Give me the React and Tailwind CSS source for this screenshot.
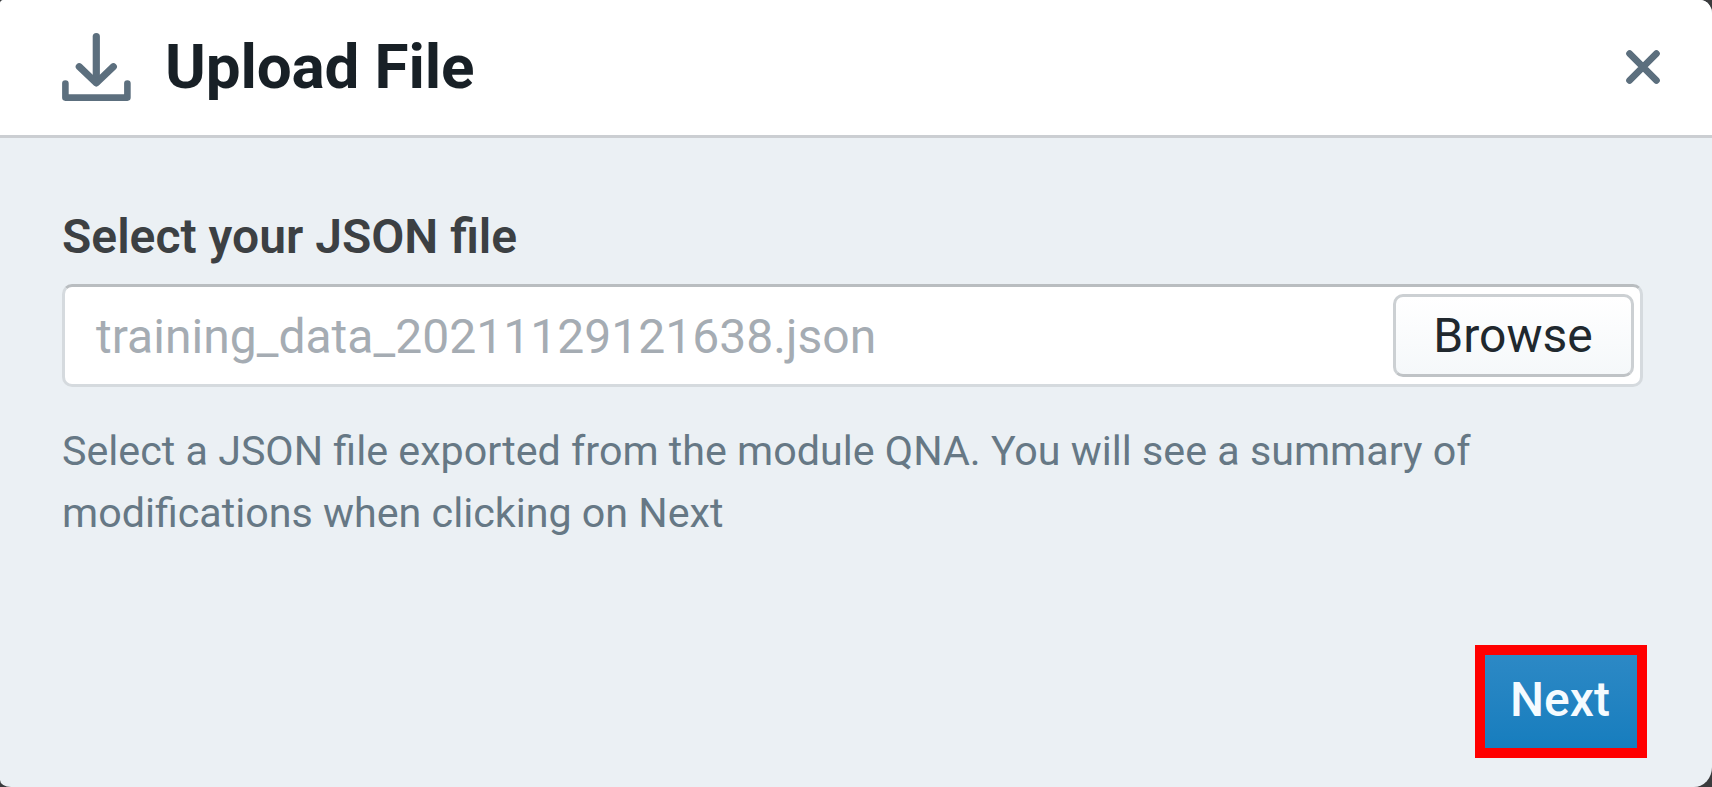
function ImportIcon() {
  return (
    <svg
      className="h-[69px] w-[69px] shrink-0"
      viewBox="0 0 69 69"
      fill="none"
      stroke="#5c6f7e"
      strokeLinecap="round"
      strokeLinejoin="round"
    >
      <path d="M34.3 3.6V49" strokeWidth="7.2" />
      <path d="M17.2 33.6L34.3 50L51.4 33.6" strokeWidth="7" />
      <path d="M3.4 50.6V64.6H65.4V50.6" strokeWidth="6.6" />
    </svg>
  );
}

function CloseIcon() {
  return (
    <svg
      className="h-9 w-9"
      viewBox="0 0 36 36"
      fill="none"
      stroke="#5c6f7e"
      strokeWidth="6.8"
      strokeLinecap="round"
    >
      <path d="M4.6 4.6L31.4 31.4M31.4 4.6L4.6 31.4" />
    </svg>
  );
}

function Header() {
  return (
    <header className="flex h-[138px] shrink-0 items-center border-b-[3px] border-[#cbced2] bg-white pr-[51px] pl-[62px]">
      <div className="flex flex-1 items-center gap-[33px]">
        <ImportIcon />
        <h1 className="pb-0.5 pl-px text-[62px] leading-[73px] font-bold tracking-[-0.16px] text-[#182026]">
          Upload File
        </h1>
      </div>
      <button type="button" aria-label="Close" className="pb-0.5">
        <CloseIcon />
      </button>
    </header>
  );
}

function FileInput() {
  return (
    <div className="mt-[19px] flex h-[103px] items-center rounded-[10px] border-[3px] border-[#d5dade] border-t-[#b9bdc0] bg-white pr-1.5 pl-[31px]">
      <span className="flex-1 pt-0.5 text-5xl leading-[57px] tracking-[0.03px] text-[#a5acb3]">
        training_data_20211129121638.json
      </span>
      <button
        type="button"
        className="flex h-[83px] w-[241px] items-center justify-center rounded-[10px] border-[3px] border-[#ccd0d3] border-b-[#bfc3c6] bg-linear-to-b from-white to-[#f5f8fa] pr-px text-5xl leading-[57px] text-[#20282e]"
      >
        Browse
      </button>
    </div>
  );
}

export default function App() {
  return (
    <div className="h-[787px] w-[1712px] overflow-hidden bg-[#3a3b3d] font-['Roboto',sans-serif]">
      <div className="flex h-full flex-col overflow-hidden rounded-[4px_12px_18px_11px/4px_14px_20px_7px] bg-[#ebf0f4]">
        <Header />
        <main className="flex flex-1 flex-col pt-[70px] pr-[69px] pl-[62px]">
          <label className="text-5xl leading-[57px] font-semibold text-[#3c4043]">
            Select your JSON file
          </label>
          <FileInput />
          <p className="mt-[33px] w-[1440px] text-[41.23px] leading-[62px] text-[#667885]">
            Select a JSON file exported from the module QNA. You will see a summary of modifications
            when clicking on Next
          </p>
          <button
            type="button"
            className="mt-[101px] -mr-1 flex h-[113px] w-[172px] items-center justify-center self-end border-[10px] border-[#ff0000] bg-linear-to-b from-[#2e8ac6] to-[#137cbd] bg-origin-border pr-0.5 pb-1 text-5xl leading-[57px] font-medium text-[#f5fbff]"
          >
            Next
          </button>
        </main>
      </div>
    </div>
  );
}
